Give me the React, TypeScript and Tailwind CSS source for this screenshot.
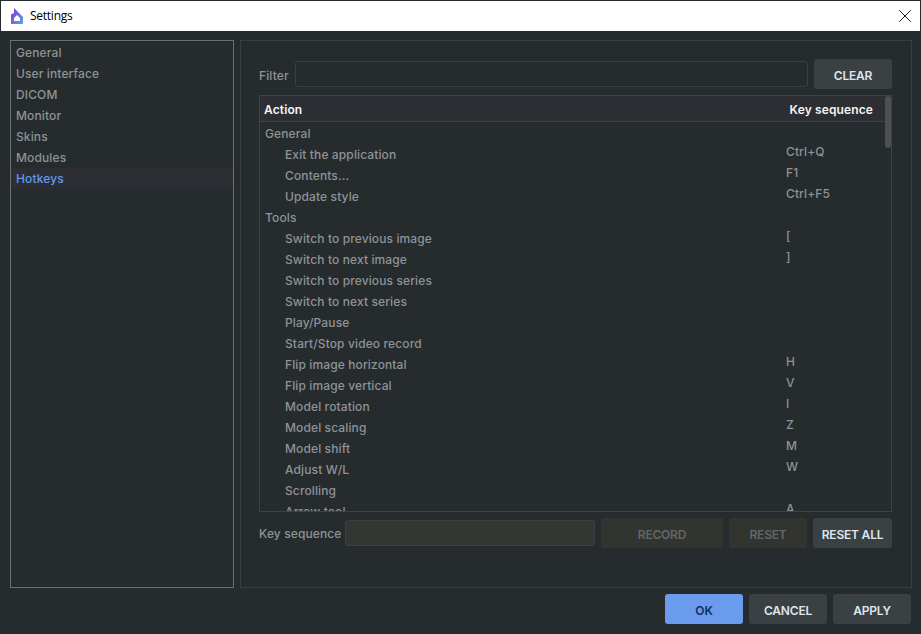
import React from 'react';
import { X } from 'lucide-react';

const navItems = ['General', 'User interface', 'DICOM', 'Monitor', 'Skins', 'Modules', 'Hotkeys'];

const rows = [
  { label: 'General', group: true },
  { label: 'Exit the application', keys: 'Ctrl+Q' },
  { label: 'Contents...', keys: 'F1' },
  { label: 'Update style', keys: 'Ctrl+F5' },
  { label: 'Tools', group: true },
  { label: 'Switch to previous image', keys: '[' },
  { label: 'Switch to next image', keys: ']' },
  { label: 'Switch to previous series' },
  { label: 'Switch to next series' },
  { label: 'Play/Pause' },
  { label: 'Start/Stop video record' },
  { label: 'Flip image horizontal', keys: 'H' },
  { label: 'Flip image vertical', keys: 'V' },
  { label: 'Model rotation', keys: 'I' },
  { label: 'Model scaling', keys: 'Z' },
  { label: 'Model shift', keys: 'M' },
  { label: 'Adjust W/L', keys: 'W' },
  { label: 'Scrolling' },
  { label: 'Arrow tool', keys: 'A' },
];

function Button({ label, kind = 'normal', width }: { label: string; kind?: 'normal' | 'primary' | 'disabled'; width: string }) {
  const colors =
    kind === 'primary'
      ? 'bg-[#6b9bec] text-[#10305f]'
      : kind === 'disabled'
        ? 'bg-[#32342f] text-[#63676a]'
        : 'bg-[#3b4043] text-[#dfe6ee]';
  return (
    <button className={`h-[30px] pt-[3px] rounded-[3px] text-[12px] font-semibold tracking-[-0.2px] shrink-0 ${width} ${colors}`}>
      {label}
    </button>
  );
}

export default function App() {
  return (
    <div className="flex flex-col w-[921px] h-[634px] overflow-hidden bg-[#262b2e] text-[#8e9396] text-[12px] font-medium font-['Inter','Liberation_Sans',sans-serif] tracking-[0.12px]">
      {/* Title bar */}
      <div className="flex items-center h-[30px] mx-px mt-px bg-white text-black font-normal tracking-[-0.25px] font-['Open_Sans',sans-serif] shrink-0">
        <svg className="ml-[10px] w-[12px] h-[16px]" viewBox="0 0 12 16">
          <defs>
            <linearGradient id="logo" x1="0" y1="0" x2="1" y2="1">
              <stop offset="0" stopColor="#7b35c4" />
              <stop offset="0.5" stopColor="#7468dc" />
              <stop offset="1" stopColor="#55a8ec" />
            </linearGradient>
          </defs>
          <path fillRule="evenodd" d="M0 16V6.5L3 5V0l9 9v7H0zM3 13h6v-3L6 7l-3 3v3z" fill="url(#logo)" />
        </svg>
        <span className="ml-[7px] text-[12px]">Settings</span>
        <X className="ml-auto mr-[4px] w-[22px] h-[22px]" strokeWidth={1} />
      </div>

      <div className="flex flex-1 min-h-0 pl-[10px] pr-[9px] pt-[9px] gap-[6px]">
        {/* Left nav */}
        <div className="w-[224px] h-[548px] pt-px border border-[#6a6f71]">
          {navItems.map((item) => (
            <div
              key={item}
              className={`h-[21px] pl-[5px] flex items-center ${item === 'Hotkeys' ? 'bg-[#2d2e33] text-[#5f98f0]' : ''}`}
            >
              {item}
            </div>
          ))}
        </div>

        {/* Hotkeys page */}
        <div className="flex-1 h-[548px] border border-[#3a3f41] pl-[18px] pr-[19px] pt-[18px]">
          <div className="flex items-center h-[30px]">
            <span className="w-[36px] pt-[4px] shrink-0">Filter</span>
            <input className="w-[513px] h-[26px] rounded-[3px] border border-[#3b4043] bg-transparent" />
            <Button label="CLEAR" width="w-[78px] ml-[6px]" />
          </div>

          <div className="relative mt-[6px] h-[417px] border border-[#3e4345] overflow-hidden">
            <div className="flex items-center justify-between h-[26px] pt-[3px] bg-[#2d2e33] border-b border-[#3e4345] pl-[4px] pr-[12px] mr-[6px] font-semibold text-[#f2f4f6]">
              <span>Action</span>
              <span>Key sequence</span>
            </div>
            {rows.map((row) => (
              <div key={row.label} className="relative h-[21px] pt-[3px] flex items-center">
                <span className={row.group ? 'pl-[5px]' : 'pl-[25px]'}>{row.label}</span>
                {row.keys && <span className="absolute left-[526px] top-0">{row.keys}</span>}
              </div>
            ))}
            <div className="absolute right-0 top-0 w-[6px] h-[52px] rounded-[3px] bg-[#4c5054]" />
          </div>

          <div className="flex items-center mt-[6px] h-[30px]">
            <span className="w-[86px] pt-[2px] shrink-0 whitespace-nowrap">Key sequence</span>
            <input className="w-[250px] h-[26px] rounded-[3px] border border-[#3b4043] bg-[#343633]" />
            <Button label="RECORD" kind="disabled" width="w-[122px] ml-[6px]" />
            <Button label="RESET" kind="disabled" width="w-[78px] ml-[6px]" />
            <Button label="RESET ALL" width="w-[79px] ml-[6px]" />
          </div>
        </div>
      </div>

      {/* Dialog buttons */}
      <div className="flex justify-end gap-[6px] pr-[10px] pb-[10px] shrink-0">
        <Button label="OK" kind="primary" width="w-[78px]" />
        <Button label="CANCEL" width="w-[78px]" />
        <Button label="APPLY" width="w-[78px]" />
      </div>
    </div>
  );
}
